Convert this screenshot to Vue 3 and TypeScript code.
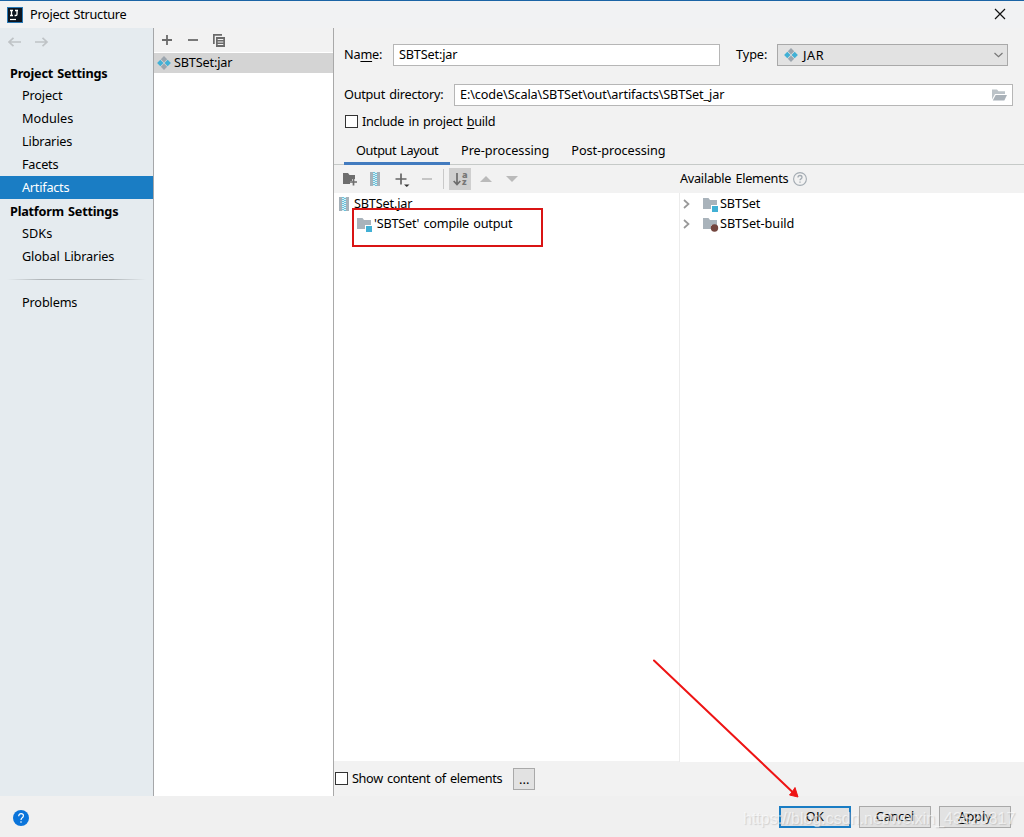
<script setup lang="ts">
import type { Directive } from 'vue'

interface NavItem {
  label: string
  width: number
  kind: 'head' | 'item' | 'line'
  selected?: boolean
}

const nav: NavItem[] = [
  { label: 'Project Settings', width: 97, kind: 'head' },
  { label: 'Project', width: 40, kind: 'item' },
  { label: 'Modules', width: 51, kind: 'item' },
  { label: 'Libraries', width: 50, kind: 'item' },
  { label: 'Facets', width: 36, kind: 'item' },
  { label: 'Artifacts', width: 47, kind: 'item', selected: true },
  { label: 'Platform Settings', width: 108, kind: 'head' },
  { label: 'SDKs', width: 30, kind: 'item' },
  { label: 'Global Libraries', width: 92, kind: 'item' },
  { label: '', width: 0, kind: 'line' },
  { label: 'Problems', width: 55, kind: 'item' },
]

const tabs = [
  { label: 'Output Layout', width: 82, active: true },
  { label: 'Pre-processing', width: 88, active: false },
  { label: 'Post-processing', width: 94, active: false },
]

const available = [
  { label: 'SBTSet', width: 40, build: false },
  { label: 'SBTSet-build', width: 74, build: true },
]

// Tracks a label so that it fills the given width.
const vFit: Directive<HTMLElement, number> = {
  mounted(el, binding) {
    const count = (el.textContent ?? '').length
    const natural = el.getBoundingClientRect().width
    el.style.letterSpacing = `${(binding.value + 0.3 - natural) / count}px`
  },
}
</script>

<template>
  <div class="window">
    <header class="titlebar">
      <svg class="logo" width="16" height="16" viewBox="0 0 16 16">
        <rect width="16" height="16" fill="#2878b5" />
        <rect x="1" y="1" width="14" height="14" fill="#0b1420" />
        <path d="M3 3.5h3M4.5 3.5v5M3 8.500h3M8 3.500h3M10 3.500v3.700q0 1.300-1.300 1.300H7.600" fill="none" stroke="#fff" stroke-width="1.300" />
        <path d="M3 12.500h6" stroke="#fff" stroke-width="1.200" />
      </svg>
      <span v-fit="96" class="t">Project Structure</span>
      <svg class="close" width="12" height="12" viewBox="0 0 12 12">
        <path d="M1 1l10 10M11 1L1 11" stroke="#111" stroke-width="1.200" />
      </svg>
    </header>

    <div class="body">
      <aside class="sidebar">
        <div class="history">
          <svg width="14" height="10" viewBox="0 0 14 10"><path d="M13 5H1M5.500 .8L1 5 5.500 9.200" fill="none" stroke="#bfc3c6" stroke-width="1.700" /></svg>
          <svg width="14" height="10" viewBox="0 0 14 10"><path d="M0 5h12M7.500 .8L12 5 7.500 9.200" fill="none" stroke="#bfc3c6" stroke-width="1.700" /></svg>
        </div>
        <template v-for="(n, i) in nav" :key="i">
          <div v-if="n.kind === 'line'" class="nav-line"><i /></div>
          <div v-else class="nav-row" :class="[n.kind, { selected: n.selected }]">
            <span v-fit="n.width" class="t">{{ n.label }}</span>
          </div>
        </template>
      </aside>

      <section class="artifacts">
        <div class="list-tools">
          <svg width="10" height="10" viewBox="0 0 10 10"><path d="M5 0v10M0 5h10" stroke="#6b6b6b" stroke-width="1.800" /></svg>
          <svg width="10" height="10" viewBox="0 0 10 10"><path d="M0 5h10" stroke="#6b6b6b" stroke-width="1.800" /></svg>
          <svg class="copy" width="12" height="13" viewBox="0 0 12 13">
            <path d="M0 0h9v1.700H1.700V10H0z" fill="#6b6b6b" />
            <path d="M3 3h9v10H3z" fill="#6b6b6b" />
            <path d="M4.700 5.500h5.600M4.700 8h5.600M4.700 10.500h5.600" stroke="#f2f2f2" />
          </svg>
        </div>
        <div class="list-row">
          <svg width="14" height="14" viewBox="0 0 14 14">
            <path d="M7 .1l3.200 3.200L7 6.500 3.800 3.300zM7 7.500l3.200 3.200L7 13.900l-3.200-3.200z" fill="#9ba5ae" />
            <path d="M3.300 3.800L6.500 7l-3.200 3.200L.1 7zM10.700 3.800L13.900 7l-3.200 3.200L7.500 7z" fill="#41b0d5" />
          </svg>
          <span v-fit="58" class="t">SBTSet:jar</span>
        </div>
      </section>

      <main class="editor">
        <div class="form-row name-row">
          <label><span v-fit="38" class="t">Na<u>m</u>e:</span></label>
          <div class="field name-field"><span v-fit="58" class="t">SBTSet:jar</span></div>
          <label class="type-label"><span v-fit="31" class="t">Type:</span></label>
          <div class="field select">
            <svg width="14" height="14" viewBox="0 0 14 14">
              <path d="M7 .1l3.200 3.200L7 6.500 3.800 3.300zM7 7.500l3.200 3.200L7 13.900l-3.200-3.200z" fill="#9ba5ae" />
              <path d="M3.300 3.800L6.500 7l-3.200 3.200L.1 7zM10.700 3.800L13.900 7l-3.200 3.200L7.500 7z" fill="#41b0d5" />
            </svg>
            <span v-fit="21" class="t jar">JAR</span>
            <svg class="caret" width="9" height="6" viewBox="0 0 9 6"><path d="M.5 1l4 3.700L8.500 1" fill="none" stroke="#777" stroke-width="1.200" /></svg>
          </div>
        </div>
        <div class="form-row dir-row">
          <label><span v-fit="99" class="t">Output directory:</span></label>
          <div class="field dir-field">
            <span v-fit="264" class="t">E:\code\Scala\SBTSet\out\artifacts\SBTSet_jar</span>
            <svg width="15" height="12" viewBox="0 0 15 12">
              <path d="M0 .5h5l1.500 1.800H13V5H3L0 10.500z" fill="#bcc3c8" />
              <path d="M3.700 6H15l-2.700 5.500H.8z" fill="#aab2b9" />
            </svg>
          </div>
        </div>
        <div class="check-row">
          <i class="box" />
          <span v-fit="133" class="t">Include in project <u>b</u>uild</span>
        </div>

        <nav class="tabs">
          <div v-for="t in tabs" :key="t.label" class="tab" :class="{ active: t.active }">
            <span v-fit="t.width" class="t">{{ t.label }}</span>
          </div>
        </nav>

        <div class="layout-tools">
          <div class="tools">
            <svg width="15" height="14" viewBox="0 0 15 14">
              <path d="M0 1h5l1.500 2H12v4H9v2H7v3H0z" fill="#6e6e6e" />
              <path d="M10.500 6.500v7M7 10h7" stroke="#6e6e6e" stroke-width="1.700" />
            </svg>
            <svg width="10" height="14" viewBox="0 0 10 14">
              <path d="M0 0h3v14H0zM7 0h3v14H7z" fill="#a6b1b9" />
              <path d="M3 0h4v14H3z" fill="#d9f0f6" />
              <path d="M4 0v14M6 1v13" stroke="#43b3d4" stroke-width="1.500" stroke-dasharray="1 1" />
            </svg>
            <svg width="15" height="15" viewBox="0 0 15 15">
              <path d="M6 1.500v11M.5 7h11" stroke="#666" stroke-width="1.700" />
              <path d="M9 12.500h5.500l-2.750 2.500z" fill="#333" />
            </svg>
            <svg width="10" height="14" viewBox="0 0 10 14"><path d="M0 7h10" stroke="#bdbdbd" stroke-width="1.700" /></svg>
            <i class="sep" />
            <span class="sort">
              <svg width="8" height="13" viewBox="0 0 8 13"><path d="M4 0v11.500M.7 8L4 11.500 7.300 8" fill="none" stroke="#6b6b6b" stroke-width="1.700" /></svg>
              <span class="az"><b>a</b><b>z</b></span>
            </span>
            <svg width="12" height="14" viewBox="0 0 12 14"><path d="M0 10l6-6 6 6z" fill="#bababa" /></svg>
            <svg width="12" height="14" viewBox="0 0 12 14"><path d="M0 4l6 6 6-6z" fill="#bababa" /></svg>
          </div>
          <div class="avail-head">
            <span v-fit="108" class="t">Available Elements</span>
            <svg width="14" height="14" viewBox="0 0 14 14">
              <circle cx="7" cy="7" r="6.400" fill="none" stroke="#a3abb2" stroke-width="1.100" />
              <path d="M5 5.500q0-2 2-2t2 1.800q0 1-1 1.600t-1 1.400M7 9.500v1.300" fill="none" stroke="#a3abb2" stroke-width="1.300" />
            </svg>
          </div>
        </div>

        <div class="trees">
          <div class="tree output">
            <div class="tree-row root">
              <svg width="10" height="14" viewBox="0 0 10 14">
                <path d="M0 0h3v14H0zM7 0h3v14H7z" fill="#a6b1b9" />
                <path d="M3 0h4v14H3z" fill="#d9f0f6" />
                <path d="M4 0v14M6 1v13" stroke="#43b3d4" stroke-width="1.500" stroke-dasharray="1 1" />
              </svg>
              <span v-fit="58" class="t">SBTSet.jar</span>
            </div>
            <div class="tree-row child">
              <svg width="16" height="15" viewBox="0 0 16 15">
                <path d="M0 1h5.500l1.500 2h7v5H8v4H0z" fill="#a9b3bb" />
                <path d="M9 9h6v6H9z" fill="#41b0d5" />
              </svg>
              <span v-fit="138" class="t">'SBTSet' compile output</span>
              <div class="highlight" />
            </div>
          </div>
          <div class="tree avail">
            <div v-for="a in available" :key="a.label" class="tree-row">
              <svg class="chev" width="7" height="10" viewBox="0 0 7 10"><path d="M1 1l4.500 4L1 9" fill="none" stroke="#999" stroke-width="1.700" /></svg>
              <svg width="16" height="15" viewBox="0 0 16 15">
                <path d="M0 1h5.500l1.500 2h7v5H8v4H0z" fill="#a9b3bb" />
                <circle v-if="a.build" cx="11.500" cy="11" r="3.700" fill="#73453e" />
                <path v-else d="M9 9h6v6H9z" fill="#41b0d5" />
              </svg>
              <span v-fit="a.width" class="t">{{ a.label }}</span>
            </div>
          </div>
        </div>

        <div class="show-row">
          <i class="box" />
          <span v-fit="150" class="t">Show content of elements</span>
          <button class="more">...</button>
        </div>
      </main>
    </div>

    <footer class="footer">
      <svg class="help" width="16" height="16" viewBox="0 0 16 16">
        <circle cx="8" cy="8" r="8" fill="#0a74da" />
        <path d="M5.700 6.200q0-2.500 2.400-2.500t2.300 2.100q0 1.200-1.200 2T8 10M8 11.300v1.500" fill="none" stroke="#fff" stroke-width="1.200" />
      </svg>
      <div class="buttons">
        <button class="btn primary"><span v-fit="18" class="t">OK</span></button>
        <button class="btn"><span v-fit="38" class="t">Cancel</span></button>
        <button class="btn"><span v-fit="33" class="t"><u>A</u>pply</span></button>
      </div>
    </footer>

    <svg class="arrow" width="160" height="150" viewBox="0 0 160 150">
      <path d="M4 10.500L142.500 142" stroke="#ee1414" stroke-width="2" stroke-linecap="round" />
      <path d="M148 147l-8.500-2 3-3.500 2.500-4z" fill="#ee1414" stroke="#ee1414" />
    </svg>
    <div class="watermark"><span v-fit="272">https://blog.csdn.net/weixin_43520817</span></div>
  </div>
</template>

<style>
body {
  overflow: hidden;
}
</style>

<style scoped>
.window {
  position: relative;
  width: 1024px;
  height: 837px;
  box-sizing: border-box;
  display: flex;
  flex-direction: column;
  overflow: hidden;
  background: #f2f2f2;
  border-top: 1px solid #1b64a5;
  color: #000;
  font: 12.7px/20px "Noto Sans", "Open Sans", sans-serif;
  word-spacing: 1.2px;
}
.window * { box-sizing: border-box; }
.window svg { display: block; flex: none; }
.t { display: inline-block; white-space: pre; flex: none; margin-top: -2px; }
u { text-underline-offset: 2px; text-decoration-thickness: 1px; text-decoration-skip-ink: none; }

.titlebar { height: 27px; flex: none; display: flex; align-items: center; padding: 0 18px 0 7px; background: #f1f2f3; }
.logo { margin-right: 7px; }
.close { margin: -1px 0 0 auto; }

.body { flex: none; height: 768px; display: flex; }
.sidebar { width: 154px; background: #e5ebef; border-right: 1px solid #a5a7a9; }
.history { height: 33px; padding: 9px 0 0 8px; display: flex; gap: 13px; }
.nav-row { height: 23px; display: flex; align-items: center; padding-left: 22px; }
.nav-row.head { padding-left: 10px; font-weight: 700; }
.nav-row.head .t { margin-top: 0; }
.nav-row.selected { background: #1a7dc4; color: #fff; }
.nav-line { height: 23px; padding: 11px 7px 0; }
.nav-line i { display: block; height: 1px; background: linear-gradient(90deg, transparent, #b0b5b8 25%, #b0b5b8 75%, transparent); }

.artifacts { width: 180px; background: #fff; border-right: 1px solid #a9a9a9; }
.list-tools { height: 24px; display: flex; align-items: center; gap: 16px; padding-left: 8px; background: #f2f2f2; }
.copy { margin-left: -1px; }
.list-row { height: 20px; margin-top: 1px; display: flex; align-items: center; gap: 3px; padding-left: 3px; background: #d4d4d4; }

.editor { width: 690px; display: flex; flex-direction: column; }
.form-row { height: 22px; display: flex; align-items: center; padding-left: 10px; flex: none; }
.form-row label { width: 49px; display: flex; }
.name-row { margin-top: 16px; }
.field { height: 22px; border: 1px solid #b6b6b6; background: #fff; display: flex; align-items: center; padding-left: 5px; }
.name-field { width: 327px; }
.form-row .type-label { width: 41px; margin-left: 16px; }
.select { width: 231px; background: #e2e2e2; border-color: #a9a9a9; padding: 0 4px 0 6px; gap: 5px; }
.jar { margin-top: 0; }
.caret { margin-left: auto; }
.dir-row { margin-top: 18px; }
.dir-row label { width: 110px; }
.dir-field { width: 559px; justify-content: space-between; padding-right: 5px; }
.check-row { margin: 5px 0 0 11px; height: 21px; display: flex; align-items: center; gap: 4px; }
.box { width: 13px; height: 13px; border: 1px solid #333; background: #fff; flex: none; }
.check-row .t, .show-row .t { margin-top: -1px; }

.tabs { height: 33px; display: flex; padding-left: 10px; border-bottom: 1px solid #c6cac8; flex: none; }
.tab { display: flex; align-items: flex-start; padding: 10px 11px 0; height: 33px; }
.tab.active { width: 106px; padding-left: 12px; border-bottom: 3px solid #427bbf; }
.layout-tools { height: 28px; display: flex; flex: none; }
.tools { width: 346px; display: flex; align-items: center; padding-left: 9px; gap: 12px; }
.tools > svg:nth-child(2) { margin-right: 3px; }
.sep { width: 1px; height: 20px; background: #c9c9c9; margin-right: -7px; margin-left: -1px; }
.sort { width: 22px; height: 22px; margin-right: -3px; background: #cfcfcf; display: flex; align-items: center; padding-left: 4px; gap: 1px; }
.az { display: flex; flex-direction: column; margin-top: -2px; font: 700 9px/7px "Noto Sans", sans-serif; color: #777; }
.tools > svg:last-child { margin-left: 2px; }
.avail-head { display: flex; align-items: center; gap: 5px; }

.trees { height: 569px; display: flex; flex: none; }
.tree { background: #fff; padding-top: 1px; }
.output { width: 345px; height: 568px; }
.avail { width: 345px; border-left: 1px solid #ececec; }
.tree-row { height: 20px; position: relative; display: flex; align-items: center; padding-left: 3px; }
.root { padding-left: 5px; gap: 5px; }
.child { padding-left: 23px; gap: 1px; }
.avail .tree-row { gap: 1px; }
.chev { margin-right: 12px; }
.highlight { position: absolute; left: 18px; top: -6px; width: 191px; height: 39px; border: 2px solid #d91414; }
.show-row { height: 33px; display: flex; align-items: center; padding-left: 1px; gap: 4px; }
.more { width: 22px; height: 22px; margin: 1px 0 0 7px; padding: 0; border: 1px solid #a9a9a9; background: #e2e2e2; font: 13px/18px "Noto Sans", sans-serif; }

.footer { height: 41px; flex: none; display: flex; justify-content: space-between; align-items: center; background: #f0f0f0; padding: 1px 13px 0; }
.help { margin-top: 2px; }
.buttons { display: flex; gap: 8px; }
.btn { width: 72px; height: 22px; padding: 0; display: flex; justify-content: center; align-items: center; border: 1px solid #a9a9a9; background: #e2e2e2; color: #000; font: inherit; }
.primary { border: 2px solid #1a7dc4; }
.arrow { position: absolute; left: 650px; top: 649px; }
.watermark { position: absolute; left: 743px; top: 807px; font: 16px/22px "Liberation Sans", Arial, sans-serif; word-spacing: 0; color: rgba(255, 255, 255, 0.6); text-shadow: 1px 1px 1px rgba(150, 150, 150, 0.35); white-space: nowrap; }
</style>
